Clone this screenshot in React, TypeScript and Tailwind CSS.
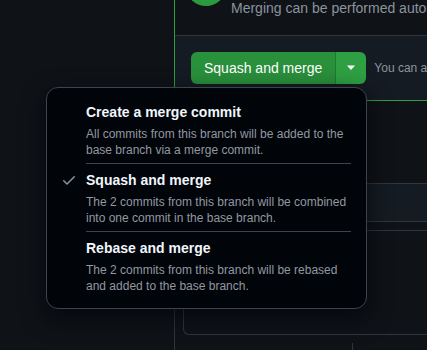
type MergeOption = {
  title: string;
  description: string;
  selected?: boolean;
};

const options: MergeOption[] = [
  {
    title: 'Create a merge commit',
    description: 'All commits from this branch will be added to the base branch via a merge commit.',
  },
  {
    title: 'Squash and merge',
    description: 'The 2 commits from this branch will be combined into one commit in the base branch.',
    selected: true,
  },
  {
    title: 'Rebase and merge',
    description: 'The 2 commits from this branch will be rebased and added to the base branch.',
  },
];

function CheckIcon() {
  // octicon check-16
  return (
    <svg width="16" height="16" viewBox="0 0 16 16" fill="#8b949e" className="mt-[2px] ml-[14px]">
      <path d="M13.78 4.22a.75.75 0 0 1 0 1.06l-7.25 7.25a.75.75 0 0 1-1.06 0L2.22 9.28a.751.751 0 0 1 .018-1.042.751.751 0 0 1 1.042-.018L6 10.94l6.72-6.72a.75.75 0 0 1 1.06 0Z" />
    </svg>
  );
}

function MergeMenu() {
  return (
    <div className="absolute left-[46px] top-[87px] w-[321px] rounded-xl border border-[#3d444d] bg-[#010409] pt-2 pb-[9px] shadow-[0_8px_24px_rgba(1,4,9,0.75)]">
      {options.map((opt, i) => (
        <div key={opt.title}>
          {i > 0 && <div className="ml-[39px] mr-[15px] h-px bg-[#3d444d]" />}
          <div className="flex pt-[6px] pb-[5px]">
            <div className="w-[39px] shrink-0">{opt.selected && <CheckIcon />}</div>
            <div className="w-[264px]">
              <div className="text-[14px] leading-5 font-bold text-[#f0f6fc]">{opt.title}</div>
              <div className="mt-1 text-[12px] leading-4 text-[#9198a1]">{opt.description}</div>
            </div>
          </div>
        </div>
      ))}
    </div>
  );
}

export default function App() {
  return (
    <div
      className="relative w-[427px] h-[350px] overflow-hidden bg-[#0f1217]"
      style={{ fontFamily: '"Liberation Sans", Arial, sans-serif' }}
    >
      <div className="flex h-full">
        <div className="w-[174px] shrink-0" />
        <div className="flex-1 min-w-0 flex flex-col">
          {/* Merge box */}
          <div className="border-l border-b border-[#2ea043]">
            <div className="h-[36px] flex items-start border-b border-[#30363d] pl-[11px] overflow-hidden">
              <div className="w-10 h-10 rounded-full bg-[#2a9a40] mt-[-34px] shrink-0" />
              <span className="ml-[5px] mt-[-2px] text-[14px] leading-5 text-[#8b949e] whitespace-nowrap">
                Merging can be performed automatically.
              </span>
            </div>
            <div className="bg-[#151b23] py-4 pl-[16px] flex items-center whitespace-nowrap overflow-hidden">
              <div className="flex h-8 rounded-md overflow-hidden shrink-0">
                <div className="flex items-center px-[13px] bg-[#29903b] text-white text-[14px] border-r border-[#1f7a31]">
                  Squash and merge
                </div>
                <div className="w-[30px] flex items-center justify-center bg-[#2ea043]">
                  <svg width="10" height="6" viewBox="0 0 10 6">
                    <path d="M1 0.5h8L5 5z" fill="#ffffff" />
                  </svg>
                </div>
              </div>
              <span className="ml-2 text-[12px] text-[#8b949e]">You can also merge this with the command line.</span>
            </div>
          </div>

          {/* Timeline below */}
          <div className="flex-1 border-l border-[#30363d] pl-2 pt-[82px]">
            <div className="h-[152px] rounded-bl-md border-l border-t border-b border-[#30363d]">
              <div className="h-[38px] bg-[#151b23] border-b border-[#30363d]" />
              <div className="mt-2 border-t border-[#30363d]" />
            </div>
            <div className="ml-[169px] mt-2 h-4 border-l border-[#30363d]" />
          </div>
        </div>
      </div>

      <MergeMenu />
    </div>
  );
}
